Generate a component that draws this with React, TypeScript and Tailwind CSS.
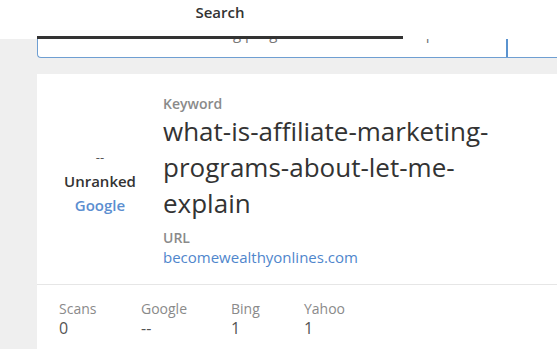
const stats = [
  { label: "Scans", value: "0", w: "w-[82px]" },
  { label: "Google", value: "--", w: "w-[90px]" },
  { label: "Bing", value: "1", w: "w-[73px]" },
  { label: "Yahoo", value: "1", w: "w-[80px]" },
];

export default function App() {
  return (
    <div className="min-h-[349px] bg-[#efefef] font-['Open_Sans',sans-serif] overflow-hidden">
      <div className="h-[39px] bg-white">
        <div className="ml-[37px] flex w-[366px] h-[39px] flex-col items-center justify-between">
          <span className="pt-[3px] text-[15px] font-semibold leading-[18px] text-[#333]">Search</span>
          <div className="h-[3px] w-full bg-[#333]" />
        </div>
      </div>

      {/* search field, scrolled mostly under the header */}
      <div className="ml-[37px] flex h-[19px] w-[560px] rounded-bl-[4px] border-b border-l border-[#6f9fd2] bg-white">
        <div className="relative w-[470px] overflow-hidden border-r-2 border-[#5a93cf]">
          <div className="absolute left-[23px] top-[-16px] whitespace-nowrap text-[15px] leading-[20px] text-[#777]">
            what is affiliate marketing programs about let me explain
          </div>
        </div>
        <div className="flex-1" />
      </div>

      <div className="ml-[37px] mt-[16px] w-[560px] bg-white pb-[20px]">
        <div className="flex pt-[21px] pb-[17px]">
          <div className="flex w-[126px] flex-col items-center justify-center">
            <span className="text-[13px] leading-[24px] text-[#555]">--</span>
            <span className="text-[15px] font-semibold leading-[24px] text-[#333]">Unranked</span>
            <span className="text-[15px] font-semibold leading-[24px] text-[#5b8ed0]">Google</span>
          </div>
          <div className="flex flex-col">
            <span className="text-[14px] font-semibold leading-[18px] text-[#8a8a8a]">Keyword</span>
            <span className="w-[345px] text-[26px] leading-[36px] text-[#333]">
              what-is-affiliate-marketing-programs-about-let-me-explain
            </span>
            <span className="mt-[8px] text-[14px] font-semibold leading-[18px] text-[#8a8a8a]">URL</span>
            <span className="text-[15px] leading-[20px] text-[#4f86cc]">becomewealthyonlines.com</span>
          </div>
        </div>
        <div className="h-px bg-[#e6e6e6]" />
        <div className="flex pl-[22px] pt-[14px]">
          {stats.map((s) => (
            <div key={s.label} className={`flex flex-col ${s.w}`}>
              <span className="text-[14px] leading-[19px] text-[#8a8a8a]">{s.label}</span>
              <span className="text-[16px] leading-[20px] text-[#555]">{s.value}</span>
            </div>
          ))}
        </div>
      </div>
    </div>
  );
}
